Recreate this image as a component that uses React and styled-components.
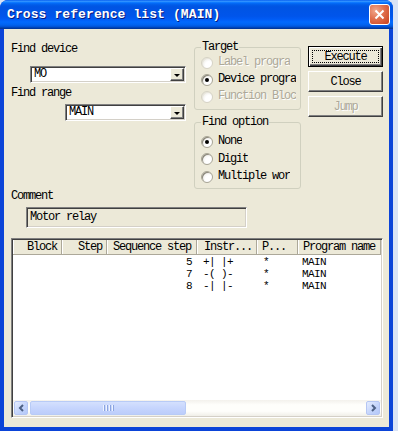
import styled, { createGlobalStyle } from 'styled-components'

const GlobalStyle = createGlobalStyle`
  html, body {
    margin: 0;
    padding: 0;
    background: #d9e3f5;
  }
  body {
    width: 398px;
    height: 431px;
    overflow: hidden;
  }
  * {
    box-sizing: border-box;
  }
`

const Window = styled.div`
  width: 393px;
  height: 431px;
  display: flex;
  flex-direction: column;
  background: #0b44d8;
  border-radius: 8px 8px 0 0;
  font-family: "Liberation Mono", monospace;
  font-size: 12px;
  letter-spacing: -1.2px;
  color: #000;
`

const TitleBar = styled.div`
  height: 29px;
  display: flex;
  align-items: center;
  padding: 0 3px 0 7px;
  border-radius: 8px 8px 0 0;
  background: linear-gradient(to bottom, #0058ee 0%, #3593ff 4%, #288eff 6%, #127dff 8%, #036ffc 10%, #0262ee 14%, #0057e5 20%, #0054e3 24%, #0055eb 56%, #005bf5 66%, #026afe 76%, #0062ef 86%, #0052d6 92%, #0040ab 96%, #003092 100%);
`

const Title = styled.div`
  flex: 1;
  color: #fff;
  font-weight: bold;
  font-size: 13px;
  letter-spacing: 0.1px;
  text-shadow: 1px 1px #0a1b80;
  white-space: nowrap;
`

const CloseButton = styled.div`
  width: 21px;
  height: 21px;
  border: 1px solid #fff;
  border-radius: 3px;
  background: radial-gradient(circle at 30% 30%, #f2a88c 0%, #e0704e 45%, #c8401c 100%);
  display: flex;
  align-items: center;
  justify-content: center;
`

const Body = styled.div`
  flex: 1;
  margin: 0 4px 4px;
  background: #ece9d8;
  padding: 12px 0 0 7px;
  display: flex;
  flex-direction: column;
`

const TopRow = styled.div`
  display: flex;
  align-items: flex-start;
`

const LeftCol = styled.div`
  width: 183px;
  display: flex;
  flex-direction: column;
`

const FieldLabel = styled.div`
  line-height: 13px;
  height: 13px;
  margin-top: ${p => p.$top || 0}px;
  white-space: nowrap;
`

const Combo = styled.div`
  display: flex;
  width: ${p => p.$width}px;
  height: 17px;
  margin-left: ${p => p.$left}px;
  margin-top: ${p => p.$top}px;
  background: #fff;
  border: 1px solid;
  border-color: #808080 #fff #fff #808080;
  box-shadow: inset 1px 1px #404040, inset -1px -1px #d4d0c8;
  padding: 1px;
`

const ComboText = styled.div`
  flex: 1;
  line-height: 13px;
  padding-left: 2px;
`

const ComboArrow = styled.div`
  width: 14px;
  height: 13px;
  background: #ece9d8;
  border: 1px solid;
  border-color: #fff #404040 #404040 #fff;
  box-shadow: inset -1px -1px #808080;
  display: flex;
  align-items: center;
  justify-content: center;
  &::after {
    content: '';
    border-left: 3px solid transparent;
    border-right: 3px solid transparent;
    border-top: 3px solid #000;
    margin-top: 1px;
  }
`

const MidCol = styled.div`
  width: 107px;
  display: flex;
  flex-direction: column;
`

const Group = styled.fieldset`
  margin: ${p => p.$top || 0}px 0 0;
  padding: ${p => p.$padTop || 0}px 2px ${p => p.$padBottom || 4}px 6px;
  border: 1px solid #d0d0bf;
  border-radius: 3px;
  min-width: 0;
`

const Legend = styled.legend`
  padding: 0 1px;
  margin-left: 0;
  line-height: 13px;
`

const RadioRow = styled.div`
  display: flex;
  align-items: center;
  height: ${p => p.$h || 17}px;
  gap: 5px;
  color: ${p => (p.$disabled ? '#aca899' : '#000')};
  text-shadow: ${p => (p.$disabled ? '1px 1px #fff' : 'none')};
`

const RadioDot = styled.span`
  flex: none;
  width: 12px;
  height: 12px;
  border-radius: 50%;
  border: 1px solid ${p => (p.$disabled ? '#d6d3c6' : '#a8a596')};
  background: radial-gradient(circle at 70% 70%, #fff 35%, #e2e0d6 100%);
  box-shadow: inset 1px 1px ${p => (p.$disabled ? '#e8e6dc' : '#8a877a')};
  display: flex;
  align-items: center;
  justify-content: center;
  &::after {
    content: '';
    width: 4px;
    height: 4px;
    border-radius: 50%;
    background: #000;
    display: ${p => (p.$checked ? 'block' : 'none')};
  }
`

const RadioLabel = styled.span`
  max-width: ${p => p.$clip}px;
  overflow: hidden;
  white-space: nowrap;
  line-height: 13px;
`

const ButtonCol = styled.div`
  margin: 5px 0 0 7px;
  display: flex;
  flex-direction: column;
  gap: 4px;
`

const Button = styled.div`
  width: 75px;
  height: 21px;
  background: #ece9d8;
  border: 1px solid;
  border-color: ${p => (p.$default ? '#000' : '#fff #404040 #404040 #fff')};
  box-shadow: ${p =>
    p.$default
      ? 'inset 1px 1px #fff, inset -1px -1px #404040, inset -2px -2px #808080'
      : 'inset -1px -1px #808080'};
  display: flex;
  align-items: center;
  justify-content: center;
  padding: 3px;
  color: ${p => (p.$disabled ? '#aca899' : '#000')};
  text-shadow: ${p => (p.$disabled ? '1px 1px #fff' : 'none')};
`

const FocusRect = styled.span`
  flex: 1;
  align-self: stretch;
  border: 1px dotted #000;
  display: flex;
  align-items: center;
  justify-content: center;
`

const CommentBox = styled.div`
  margin: 4px 0 0 15px;
  width: 221px;
  height: 21px;
  border: 1px solid;
  border-color: #808080 #fff #fff #808080;
  box-shadow: inset 1px 1px #404040, inset -1px -1px #d4d0c8;
  padding: 2px 3px;
  line-height: 15px;
`

const ListView = styled.div`
  margin-top: 10px;
  width: 372px;
  height: 180px;
  background: #fff;
  border: 1px solid;
  border-color: #808080 #fff #fff #808080;
  box-shadow: inset 1px 1px #404040, inset -1px -1px #d4d0c8;
  padding: 1px;
  display: flex;
  flex-direction: column;
`

const columns = '49px 45px 90px 60px 41px 83px'

const HeaderRow = styled.div`
  display: grid;
  grid-template-columns: ${columns};
  height: 15px;
  background: #ece9d8;
`

const HeaderCell = styled.div`
  line-height: 14px;
  border-right: 1px solid #aca899;
  border-bottom: 1px solid #aca899;
  box-shadow: inset 1px 0 #fff;
  text-align: ${p => p.$align || 'left'};
  padding: ${p => (p.$align === 'right' ? '0 4px 0 0' : `0 0 0 ${p.$pad || 5}px`)};
  white-space: nowrap;
  overflow: hidden;
`

const DataRow = styled.div`
  display: grid;
  grid-template-columns: ${columns};
  height: 12px;
  line-height: 12px;
  font-size: 11px;
  letter-spacing: -0.6px;
  &:first-of-type {
    margin-top: 1px;
  }
`

const DataCell = styled.div`
  text-align: ${p => p.$align || 'left'};
  padding: ${p => (p.$align === 'right' ? '0 5px 0 0' : `0 0 0 ${p.$pad || 5}px`)};
  white-space: pre;
  overflow: hidden;
`

const Rows = styled.div`
  flex: 1;
`

const Scrollbar = styled.div`
  height: 16px;
  display: flex;
  align-items: center;
  background: linear-gradient(to bottom, #f3f1ec, #fefefb 30%, #fefefb 70%, #f0efe8);
`

const ScrollArrow = styled.div`
  width: 14px;
  height: 14px;
  margin-left: ${p => (p.$right ? 'auto' : '1px')};
  margin-right: ${p => (p.$right ? '1px' : '0')};
  border: 1px solid #b5c6f3;
  border-radius: 2px;
  background: linear-gradient(135deg, #e4ecfe, #c2d3fb 60%, #b4c8f8);
  display: flex;
  align-items: center;
  justify-content: center;
`

const Thumb = styled.div`
  width: 156px;
  height: 14px;
  margin-left: 2px;
  border: 1px solid #b8cbf6;
  border-radius: 2px;
  background: linear-gradient(to bottom, #d4e0fd, #c6d5fd 50%, #bccdfb);
  display: flex;
  align-items: center;
  justify-content: center;
  gap: 1px;
`

const Grip = styled.span`
  width: 1px;
  height: 6px;
  background: #eef3fe;
  box-shadow: 1px 0 #8ca5e0;
  margin-right: 1px;
`

const Chevron = ({ dir }) => (
  <svg width="7" height="8" viewBox="0 0 7 8">
    <path
      d={dir === 'left' ? 'M5 1 L2 4 L5 7' : 'M2 1 L5 4 L2 7'}
      fill="none"
      stroke="#4d6185"
      strokeWidth="2"
    />
  </svg>
)

const Radio = ({ label, clip, checked, disabled, h }) => (
  <RadioRow $disabled={disabled} $h={h}>
    <RadioDot $checked={checked} $disabled={disabled} />
    <RadioLabel $clip={clip}>{label}</RadioLabel>
  </RadioRow>
)

const rows = [
  { step: '5', instr: '+| |+', p: '*', name: 'MAIN' },
  { step: '7', instr: '-( )-', p: '*', name: 'MAIN' },
  { step: '8', instr: '-| |-', p: '*', name: 'MAIN' },
]

export default function App() {
  return (
    <>
      <GlobalStyle />
      <Window>
        <TitleBar>
          <Title>Cross reference list (MAIN)</Title>
          <CloseButton>
            <svg width="11" height="11" viewBox="0 0 11 11">
              <path d="M1.5 1.5 L9.5 9.5 M9.5 1.5 L1.5 9.5" stroke="#fff" strokeWidth="2" />
            </svg>
          </CloseButton>
        </TitleBar>
        <Body>
          <TopRow>
            <LeftCol>
              <FieldLabel $top={2}>Find device</FieldLabel>
              <Combo $width={156} $left={19} $top={10}>
                <ComboText>MO</ComboText>
                <ComboArrow />
              </Combo>
              <FieldLabel $top={4}>Find range</FieldLabel>
              <Combo $width={121} $left={54} $top={4}>
                <ComboText>MAIN</ComboText>
                <ComboArrow />
              </Combo>
            </LeftCol>
            <MidCol>
              <Group>
                <Legend>Target</Legend>
                <Radio label="Label progra" clip={78} disabled />
                <Radio label="Device progra" clip={78} checked />
                <Radio label="Function Bloc" clip={78} disabled />
              </Group>
              <Group $top={6} $padTop={4} $padBottom={2}>
                <Legend>Find option</Legend>
                <Radio label="None" clip={78} checked h={17.5} />
                <Radio label="Digit" clip={30} h={17.5} />
                <Radio label="Multiple wor" clip={78} h={17.5} />
              </Group>
            </MidCol>
            <ButtonCol>
              <Button $default>
                <FocusRect>Execute</FocusRect>
              </Button>
              <Button>Close</Button>
              <Button $disabled>Jump</Button>
            </ButtonCol>
          </TopRow>
          <FieldLabel $top={1}>Comment</FieldLabel>
          <CommentBox>Motor relay</CommentBox>
          <ListView>
            <HeaderRow>
              <HeaderCell $align="right">Block</HeaderCell>
              <HeaderCell $align="right">Step</HeaderCell>
              <HeaderCell $pad={6}>Sequence step</HeaderCell>
              <HeaderCell $pad={7}>Instr...</HeaderCell>
              <HeaderCell $pad={5}>P...</HeaderCell>
              <HeaderCell $pad={5}>Program name</HeaderCell>
            </HeaderRow>
            <Rows>
              {rows.map(r => (
                <DataRow key={r.step}>
                  <DataCell />
                  <DataCell />
                  <DataCell $align="right">{r.step}</DataCell>
                  <DataCell $pad={6}>{r.instr}</DataCell>
                  <DataCell $pad={6}>{r.p}</DataCell>
                  <DataCell $pad={4}>{r.name}</DataCell>
                </DataRow>
              ))}
            </Rows>
            <Scrollbar>
              <ScrollArrow>
                <Chevron dir="left" />
              </ScrollArrow>
              <Thumb>
                <Grip />
                <Grip />
                <Grip />
                <Grip />
              </Thumb>
              <ScrollArrow $right>
                <Chevron dir="right" />
              </ScrollArrow>
            </Scrollbar>
          </ListView>
        </Body>
      </Window>
    </>
  )
}
